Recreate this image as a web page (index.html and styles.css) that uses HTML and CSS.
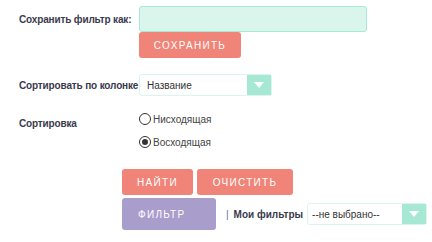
FILE: index.html
```html
<!DOCTYPE html>
<html lang="ru">
<head>
    <meta charset="UTF-8">
    <title>Фильтр</title>
    <link rel="stylesheet" href="styles.css">
</head>
<body>
    <div class="form">
        <div class="row row-save">
            <label class="label">Сохранить фильтр как:</label>
            <div class="field">
                <input type="text" class="text-input">
                <button class="btn btn-red btn-save">Сохранить</button>
            </div>
        </div>
        <div class="row row-sort">
            <label class="label">Сортировать по колонке</label>
            <div class="field">
                <div class="select select-sort">
                    <span class="select-value">Название</span>
                    <span class="select-arrow"></span>
                </div>
            </div>
        </div>
        <div class="row row-order">
            <label class="label">Сортировка</label>
            <div class="field radios">
                <label class="radio"><span class="radio-dot"></span>Нисходящая</label>
                <label class="radio"><span class="radio-dot checked"></span>Восходящая</label>
            </div>
        </div>
    </div>
    <div class="actions">
        <div class="actions-row">
            <button class="btn btn-red btn-find">Найти</button>
            <button class="btn btn-red btn-clear">Очистить</button>
        </div>
        <div class="actions-row">
            <button class="btn btn-purple btn-filter">Фильтр</button>
            <span class="sep">|</span>
            <span class="my-filters">Мои фильтры</span>
            <div class="select select-mine">
                <span class="select-value">--не выбрано--</span>
                <span class="select-arrow"></span>
            </div>
        </div>
    </div>
</body>
</html>
```
FILE: styles.css
```css
body {
    margin: 0;
    background: #fff;
    color: #3a3a4e;
    font-family: "Liberation Sans", Arial, sans-serif;
    font-size: 10px;
}
.form {
    padding: 6px 0 0 19px;
}
.row {
    display: grid;
    grid-template-columns: 120px 1fr;
}
.label {
    font-weight: bold;
    white-space: nowrap;
    letter-spacing: -0.15px;
}
.row-save .label {
    margin-top: 8px;
}
.row-sort {
    margin-top: 16px;
}
.row-sort .label {
    align-self: center;
}
.row-order {
    margin-top: 17px;
}
.row-order .label {
    margin-top: 5px;
}
.text-input {
    display: block;
    box-sizing: border-box;
    width: 228px;
    height: 26px;
    margin: 0;
    background: #d9f5ec;
    border: 1px solid #a6e9d4;
    border-radius: 3px;
}
.btn {
    box-sizing: border-box;
    border: none;
    border-radius: 3px;
    color: #fff;
    font-family: "Liberation Sans", Arial, sans-serif;
    font-size: 10px;
    letter-spacing: 1.3px;
    text-transform: uppercase;
    padding: 0;
}
.btn-red {
    background: #f08478;
    height: 26px;
}
.btn-purple {
    background: #a99dcb;
    height: 32px;
}
.btn-save {
    display: block;
    width: 102px;
}
.select {
    box-sizing: border-box;
    display: flex;
    align-items: center;
    height: 22px;
    border: 1px solid #d9f5ec;
    border-radius: 3px;
    background: #fff;
}
.select-sort {
    width: 133px;
}
.select-value {
    flex: 1;
    padding-left: 7px;
    color: #333;
}
.select-arrow {
    width: 24px;
    align-self: stretch;
    background: #a6e8d4;
    display: flex;
    align-items: center;
    justify-content: center;
}
.select-arrow::after {
    content: "";
    border-left: 5px solid transparent;
    border-right: 5px solid transparent;
    border-top: 6px solid #fff;
}
.radios {
    display: flex;
    flex-direction: column;
    gap: 11px;
}
.radio {
    display: flex;
    align-items: center;
    gap: 2px;
    color: #444;
}
.radio-dot {
    box-sizing: border-box;
    width: 12px;
    height: 12px;
    border: 1px solid #333;
    border-radius: 50%;
    display: flex;
    align-items: center;
    justify-content: center;
}
.radio-dot.checked::after {
    content: "";
    width: 6px;
    height: 6px;
    border-radius: 50%;
    background: #333;
}
.actions {
    padding: 21px 0 0 122px;
    display: flex;
    flex-direction: column;
    gap: 3px;
}
.actions-row {
    display: flex;
    align-items: center;
}
.btn-find {
    width: 71px;
    margin-right: 4px;
}
.btn-clear {
    width: 96px;
}
.btn-filter {
    width: 94px;
    text-align: left;
    padding-left: 16px;
}
.sep {
    margin-left: 10px;
    color: #5a6fa8;
}
.my-filters {
    margin-left: 5px;
    font-weight: bold;
}
.select-mine {
    width: 120px;
    margin-left: 4px;
}
.select-mine .select-value {
    padding-left: 4px;
}
```
